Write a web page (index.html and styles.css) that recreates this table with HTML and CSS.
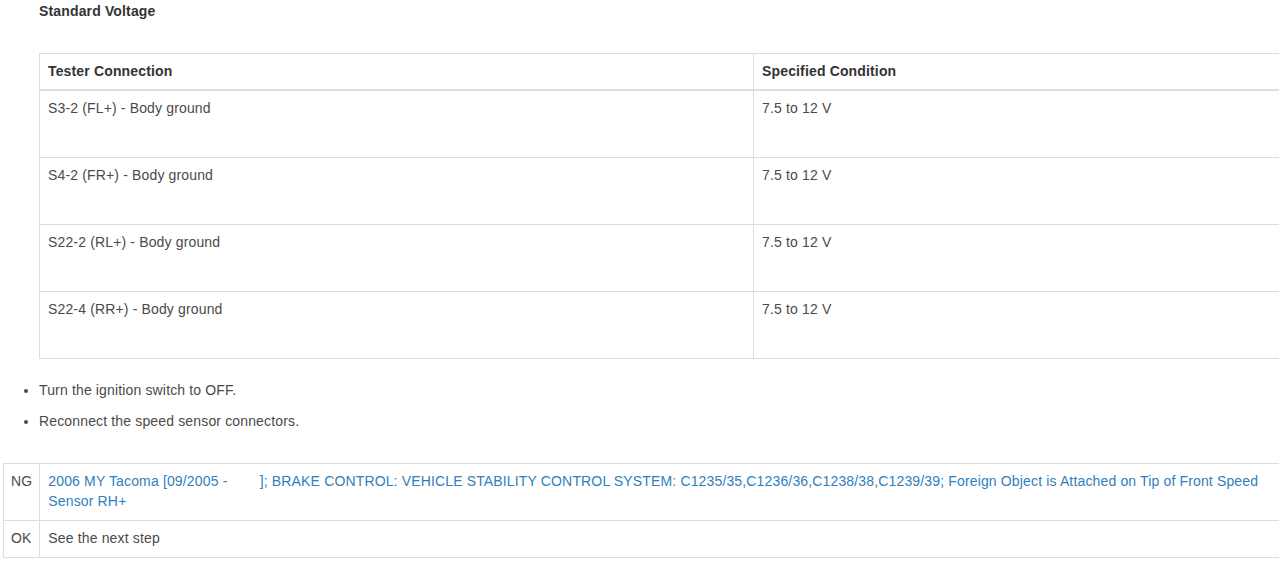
FILE: index.html
```html
<!DOCTYPE html>
<html>
<head>
<meta charset="utf-8">
<link rel="stylesheet" href="styles.css">
</head>
<body>
<div class="page">
  <h4 class="title">Standard Voltage</h4>
  <table class="spec">
    <thead>
      <tr><th class="c1">Tester Connection</th><th>Specified Condition</th></tr>
    </thead>
    <tbody>
      <tr><td>S3-2 (FL+) - Body ground</td><td>7.5 to 12 V</td></tr>
      <tr><td>S4-2 (FR+) - Body ground</td><td>7.5 to 12 V</td></tr>
      <tr><td>S22-2 (RL+) - Body ground</td><td>7.5 to 12 V</td></tr>
      <tr><td>S22-4 (RR+) - Body ground</td><td>7.5 to 12 V</td></tr>
    </tbody>
  </table>
  <ul class="steps">
    <li>Turn the ignition switch to OFF.</li>
    <li>Reconnect the speed sensor connectors.</li>
  </ul>
  <table class="result">
    <tr>
      <td class="code">NG</td>
      <td><a class="link" href="#">2006 MY Tacoma [09/2005 -&nbsp;&nbsp;&nbsp;&nbsp;&nbsp;&nbsp;&nbsp; ]; BRAKE CONTROL: VEHICLE STABILITY CONTROL SYSTEM: C1235/35,C1236/36,C1238/38,C1239/39; Foreign Object is Attached on Tip of Front Speed Sensor RH+</a></td>
    </tr>
    <tr>
      <td class="code">OK</td>
      <td>See the next step</td>
    </tr>
  </table>
</div>
</body>
</html>
```

FILE: styles.css
```css
html, body {
  margin: 0;
  padding: 0;
  background: #fff;
  overflow: hidden;
}
body {
  font-family: "Liberation Sans", Arial, sans-serif;
  font-size: 14px;
  line-height: 20px;
  color: #4a4a4a;
  letter-spacing: 0.15px;
}
.page {
  width: 1500px;
}
.title {
  margin: 1px 0 0 39px;
  font-size: 14px;
  font-weight: bold;
  color: #333;
  line-height: 20px;
}
.spec {
  margin: 32px 0 0 39px;
  width: 1428px;
  border-collapse: collapse;
  border: 1px solid #ddd;
}
.spec th {
  text-align: left;
  font-weight: bold;
  color: #333;
  padding: 7px 8px 8px;
  border: 1px solid #ddd;
  border-bottom: 2px solid #ddd;
  height: 20px;
}
.spec .c1 {
  width: 697px;
}
.spec td {
  vertical-align: top;
  padding: 7px 8px 39px;
  border: 1px solid #ddd;
  height: 20px;
}
.steps {
  margin: 21px 0 0 0;
  padding-left: 39px;
}
.steps li {
  margin-bottom: 11px;
}
.result {
  margin: 32px 0 0 3px;
  width: 1280px;
  border-collapse: collapse;
  border: 1px solid #ddd;
}
.result td {
  vertical-align: top;
  padding: 7px 8px 9px;
  border: 1px solid #ddd;
}
.result .code {
  width: 1px;
  padding-left: 7px;
  padding-right: 7px;
  white-space: nowrap;
}
.link {
  color: #2f80bd;
  text-decoration: none;
}
```
